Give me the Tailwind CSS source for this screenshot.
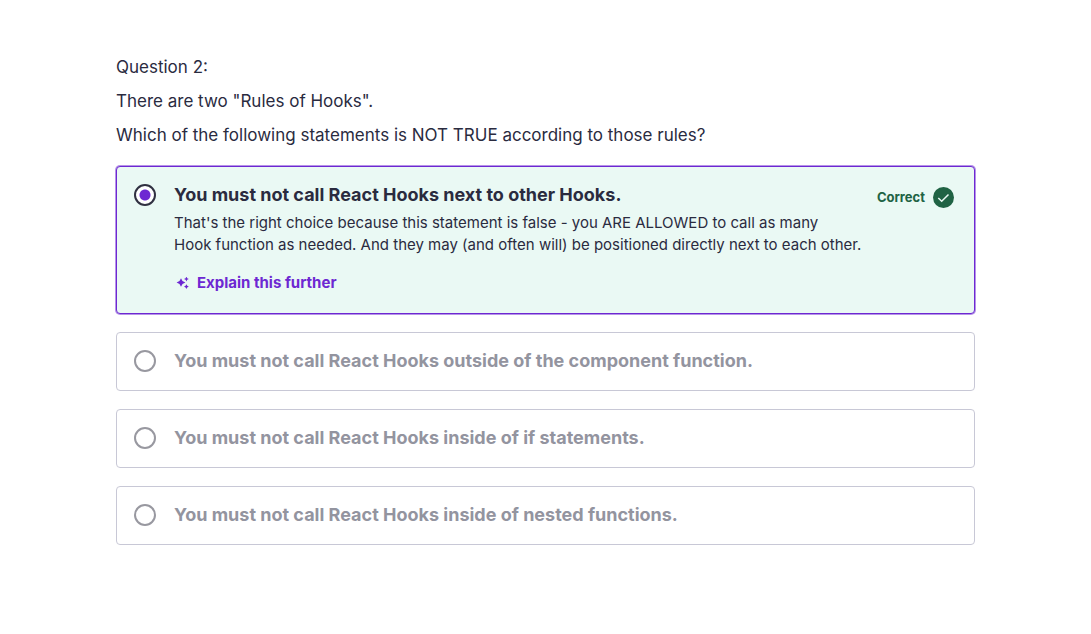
<!DOCTYPE html>
<html lang="en">
<head>
<meta charset="utf-8">
<meta name="viewport" content="width=device-width, initial-scale=1">
<title>Question 2</title>
<script src="https://cdn.jsdelivr.net/npm/@tailwindcss/browser@4"></script>
</head>
<body class="bg-white font-['Inter','Liberation_Sans',sans-serif] text-[#2a2b3f]">
<main class="px-29 pt-14">
  <form>
    <div class="flex flex-col gap-3 text-[17px] leading-[22px]">
      <p>Question 2:</p>
      <p>There are two "Rules of Hooks".</p>
      <p id="prompt">Which of the following statements is NOT TRUE according to those rules?</p>
    </div>
    <ul class="mt-5 flex flex-col gap-[18px]" role="radiogroup" aria-labelledby="prompt">
      <li class="flex items-start rounded-[4px] border border-[#6d28d2] bg-[#eaf9f4] px-[17px] pt-4 pb-[19px] ring-1 ring-[#6d28d2]/50">
        <input id="a1" type="radio" name="answer" checked class="mt-px size-[22px] shrink-0 appearance-none rounded-full border-2 border-[#303141] bg-white bg-[radial-gradient(circle,#6d28d2_5px,transparent_6px)]">
        <div class="ml-[18px] min-w-0 flex-1">
          <label for="a1" class="block text-[18px] leading-6 font-bold">You must not call React Hooks next to other Hooks.</label>
          <p class="mt-[5px] text-[15px] leading-[22px]">That's the right choice because this statement is false - you ARE ALLOWED to call as many<br>Hook function as needed. And they may (and often will) be positioned directly next to each other.</p>
          <button type="button" class="mt-4 flex items-center gap-2 pl-0.5 text-[15px] leading-[22px] font-bold text-[#6d28d2]">
            <svg class="size-[13px]" viewBox="0 0 13 13" fill="currentColor" aria-hidden="true"><path d="M5 1.2 6.5 4.1 9.4 5.5 6.5 6.9 5 9.8 3.5 6.9.6 5.5 3.5 4.1ZM10.4-.4l.8 1.6 1.6.8-1.6.8-.8 1.6-.8-1.6L8 2l1.6-.8ZM10.4 7.2l.8 1.6 1.6.8-1.6.8-.8 1.6-.8-1.6L8 9.6l1.6-.8Z"/></svg>
            Explain this further
          </button>
        </div>
        <div class="mt-[3px] mr-[3px] flex shrink-0 items-center gap-2 text-[13px] leading-[22px] font-bold text-[#206344]">
          Correct
          <svg class="size-[21px]" viewBox="0 0 21 21" fill="none" aria-hidden="true"><circle cx="10.5" cy="10.5" r="10.5" fill="#206344"/><path d="m5.3 11 3.4 3.3 6.8-6.8" stroke="#eaf9f4" stroke-width="1.5"/></svg>
        </div>
      </li>
      <li class="flex items-start rounded-[4px] border border-[#c8c8d6] px-[17px] pt-4 pb-[17px]">
        <input id="a2" type="radio" name="answer" class="mt-px size-[22px] shrink-0 appearance-none rounded-full border-2 border-[#9898a0] bg-white">
        <label for="a2" class="ml-[18px] text-[18px] leading-6 font-bold text-[#93949f]">You must not call React Hooks outside of the component function.</label>
      </li>
      <li class="flex items-start rounded-[4px] border border-[#c8c8d6] px-[17px] pt-4 pb-[17px]">
        <input id="a3" type="radio" name="answer" class="mt-px size-[22px] shrink-0 appearance-none rounded-full border-2 border-[#9898a0] bg-white">
        <label for="a3" class="ml-[18px] text-[18px] leading-6 font-bold text-[#93949f]">You must not call React Hooks inside of if statements.</label>
      </li>
      <li class="flex items-start rounded-[4px] border border-[#c8c8d6] px-[17px] pt-4 pb-[17px]">
        <input id="a4" type="radio" name="answer" class="mt-px size-[22px] shrink-0 appearance-none rounded-full border-2 border-[#9898a0] bg-white">
        <label for="a4" class="ml-[18px] text-[18px] leading-6 font-bold text-[#93949f]">You must not call React Hooks inside of nested functions.</label>
      </li>
    </ul>
  </form>
</main>
</body>
</html>
